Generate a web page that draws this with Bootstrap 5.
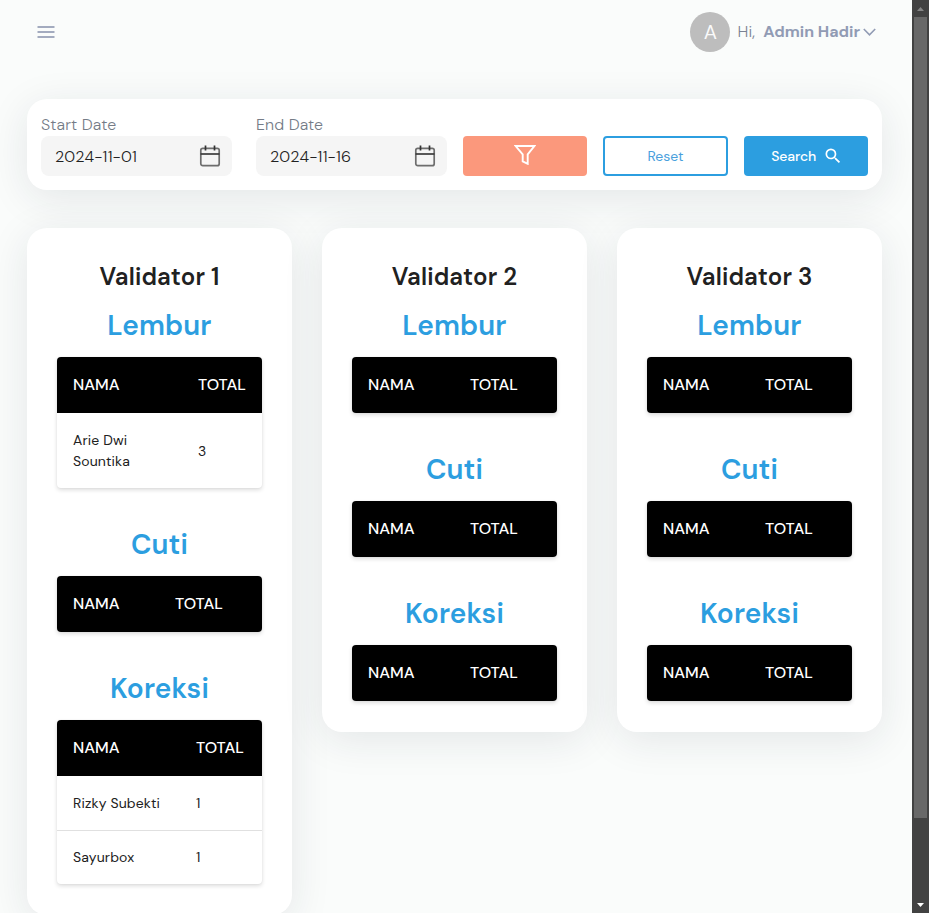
<!DOCTYPE html>
<html lang="id">
<head>
<meta charset="utf-8">
<meta name="viewport" content="width=device-width, initial-scale=1">
<title>Dashboard Validator</title>
<link href="https://cdn.jsdelivr.net/npm/bootstrap@5.3.0/dist/css/bootstrap.min.css" rel="stylesheet">
<style>
  body { font-family: "DM Sans", Inter, sans-serif; font-optical-sizing: none; background: #fafcfb; color: #212121; }
  .page-wrap { width: 912px; height: 913px; }
  .topbar { height: 64px; padding: 0 36px 0 37px; }
  .menu-toggle { color: #a3abbf; line-height: 0; }
  .user-avatar { width: 40px; height: 40px; background: #bdbdbd; color: #fafafa; font-size: 20px; margin-right: 7px; }
  .user-hi { color: #7a8294; font-size: 16px; font-weight: 300; letter-spacing: .2px; margin-right: 8px; }
  .user-name { color: #919bb4; font-size: 16px; font-weight: 700; margin-right: 3px; }
  .content-area { padding: 35px 30px 0 27px; }
  .panel { background: #fff; border-radius: 20px; box-shadow: 0 8px 40px rgba(30, 40, 60, .1); }
  .filter-panel { height: 91px; padding: 14px; gap: 16px; margin-bottom: 38px; }
  .date-group { width: 191px; }
  .date-group + .date-group { margin-left: 8px; margin-right: 0; }
  .date-label { color: #757c87; font-size: 16px; font-weight: 300; line-height: 23px; letter-spacing: .1px; }
  .date-box { height: 40px; background: #f5f5f5; border-radius: 8px; padding: 1px 10px 0 14px; font-size: 16px; font-weight: 300; letter-spacing: .3px; }
  .date-box svg { margin-bottom: 2px; }
  .action { height: 40px; flex: 1 1 0; border-radius: 4px; font-size: 14px; padding: 0; }
  .action-filter, .action-filter:hover { background: #fb987c; color: #fff; }
  .action-filter svg { margin-bottom: 2px; }
  .action-reset { border: 2px solid #2c9ee0; color: #4a9fdd; background: #fff; }
  .action-search { background: #2c9ee0; color: #fff; font-weight: 500; gap: 7px; letter-spacing: -.1px; }
  .action-search span { margin-left: 2px; }
  .validators { gap: 30px; }
  .validator { width: 265px; padding: 30px 30px 31px; }
  .validator-title { font-size: 24px; font-weight: 640; line-height: 36px; letter-spacing: .15px; padding-top: 1px; margin: 0 0 9px; }
  .section-title { font-size: 28px; font-weight: 650; line-height: 42px; letter-spacing: .15px; padding-top: 1px; margin: 0 0 10px; color: #2c9ee0; }
  .section-block + .section-block { margin-top: 35px; }
  .tally { border-radius: 4px; overflow: hidden; background: #fff; box-shadow: 0 2px 4px rgba(0, 0, 0, .14), 0 0 2px rgba(0, 0, 0, .06); }
  .tally-row { display: grid; grid-template-columns: 102px 1fr; padding-left: 16px; align-items: center; font-size: 14px; line-height: 21px; letter-spacing: .13px; min-height: 54px; }
  .tally-lembur .tally-row { grid-template-columns: 125px 1fr; }
  .tally-koreksi .tally-row { grid-template-columns: 123px 1fr; }
  .tally-head, .tally-lembur .tally-head { height: 56px; padding-bottom: 2px; background: #000; color: #fff; font-size: 16px; font-weight: 500; letter-spacing: 0; }
  .tally-line { border-top: 1px solid #e0e0e0; }
  .tally-tall { height: 75px; padding-top: 1px; }
  .tally-name { white-space: nowrap; }
  .scroll-rail { width: 17px; height: 913px; background: #424242; line-height: 0; }
  .scroll-grip { width: 13px; height: 801px; background: #686868; }
  .scroll-arrow { height: 17px; }
</style>
</head>
<body class="d-flex overflow-hidden">
<div class="page-wrap overflow-hidden">
  <header class="topbar d-flex align-items-center justify-content-between">
    <div class="menu-toggle"><svg width="18" height="14" viewBox="0 0 18 14"><path d="M.5 2h17M.5 7h17M.5 12h17" stroke="currentColor" stroke-width="2"/></svg></div>
    <div class="d-flex align-items-center">
      <div class="user-avatar rounded-circle d-flex align-items-center justify-content-center">A</div>
      <span class="user-hi">Hi,</span><span class="user-name">Admin Hadir</span>
      <svg width="13" height="8" viewBox="0 0 13 8" fill="none" stroke="#919bb4" stroke-width="1.600"><path d="M.8 1l5.7 5.8L12.200 1"/></svg>
    </div>
  </header>
  <main class="content-area">
    <section class="panel filter-panel d-flex align-items-end">
      <div class="date-group">
        <div class="date-label">Start Date</div>
        <div class="date-box d-flex align-items-center justify-content-between"><span>2024-11-01</span>
          <svg width="24" height="24" viewBox="0 0 24 24" fill="none" stroke="#6d6d6d" stroke-width="1.7"><rect x="2.800" y="4.300" width="18.400" height="17.400" rx="2"/><path d="M2.500 10h19" stroke="#3c3c3c"/><path d="M7.500 1.500v5M16.500 1.500v5" stroke="#333"/></svg></div>
      </div>
      <div class="date-group">
        <div class="date-label">End Date</div>
        <div class="date-box d-flex align-items-center justify-content-between"><span>2024-11-16</span>
          <svg width="24" height="24" viewBox="0 0 24 24" fill="none" stroke="#6d6d6d" stroke-width="1.7"><rect x="2.800" y="4.300" width="18.400" height="17.400" rx="2"/><path d="M2.500 10h19" stroke="#3c3c3c"/><path d="M7.500 1.500v5M16.500 1.500v5" stroke="#333"/></svg></div>
      </div>
      <button class="btn action action-filter" aria-label="Filter"><svg width="22" height="20" viewBox="0 0 22 20" fill="none" stroke="#fff" stroke-width="1.900"><path d="M1.600 1h18.800l-6.700 8.400v9.400l-5-2.500V9.400z"/></svg></button>
      <button class="btn action action-reset">Reset</button>
      <button class="btn action action-search d-flex align-items-center justify-content-center"><span>Search</span>
        <svg width="20" height="20" viewBox="0 0 24 24" fill="#fff"><path d="M15.500 14h-.79l-.28-.27A6.470 6.470 0 0 0 16 9.500 6.500 6.500 0 1 0 9.500 16c1.610 0 3.090-.59 4.230-1.570l.27.28v.79l5 4.990L20.490 19l-4.990-5zm-6 0C7.010 14 5 11.990 5 9.500S7.010 5 9.500 5 14 7.010 14 9.500 11.990 14 9.500 14z"/></svg></button>
    </section>
    <div class="validators d-flex align-items-start">
      <section class="panel validator">
        <h2 class="validator-title text-center">Validator 1</h2>
        <div class="section-block"><h3 class="section-title text-center">Lembur</h3>
          <div class="tally tally-lembur"><div class="tally-row tally-head"><span>NAMA</span><span>TOTAL</span></div>
            <div class="tally-row tally-tall"><span class="tally-name">Arie Dwi<br>Sountika</span><span>3</span></div></div></div>
        <div class="section-block"><h3 class="section-title text-center">Cuti</h3>
          <div class="tally"><div class="tally-row tally-head"><span>NAMA</span><span>TOTAL</span></div></div></div>
        <div class="section-block"><h3 class="section-title text-center">Koreksi</h3>
          <div class="tally tally-koreksi"><div class="tally-row tally-head"><span>NAMA</span><span>TOTAL</span></div>
            <div class="tally-row"><span class="tally-name">Rizky Subekti</span><span>1</span></div>
            <div class="tally-row tally-line"><span class="tally-name">Sayurbox</span><span>1</span></div></div></div>
      </section>
      <section class="panel validator">
        <h2 class="validator-title text-center">Validator 2</h2>
        <div class="section-block"><h3 class="section-title text-center">Lembur</h3>
          <div class="tally"><div class="tally-row tally-head"><span>NAMA</span><span>TOTAL</span></div></div></div>
        <div class="section-block"><h3 class="section-title text-center">Cuti</h3>
          <div class="tally"><div class="tally-row tally-head"><span>NAMA</span><span>TOTAL</span></div></div></div>
        <div class="section-block"><h3 class="section-title text-center">Koreksi</h3>
          <div class="tally"><div class="tally-row tally-head"><span>NAMA</span><span>TOTAL</span></div></div></div>
      </section>
      <section class="panel validator">
        <h2 class="validator-title text-center">Validator 3</h2>
        <div class="section-block"><h3 class="section-title text-center">Lembur</h3>
          <div class="tally"><div class="tally-row tally-head"><span>NAMA</span><span>TOTAL</span></div></div></div>
        <div class="section-block"><h3 class="section-title text-center">Cuti</h3>
          <div class="tally"><div class="tally-row tally-head"><span>NAMA</span><span>TOTAL</span></div></div></div>
        <div class="section-block"><h3 class="section-title text-center">Koreksi</h3>
          <div class="tally"><div class="tally-row tally-head"><span>NAMA</span><span>TOTAL</span></div></div></div>
      </section>
    </div>
  </main>
</div>
<div class="scroll-rail d-flex flex-column align-items-center">
  <div class="scroll-arrow d-flex align-items-center"><svg width="7" height="4" viewBox="0 0 7 4"><path d="M3.500 0L7 4H0z" fill="#868686"/></svg></div>
  <div class="scroll-grip"></div>
  <div class="scroll-arrow d-flex align-items-center mt-auto"><svg width="7" height="4" viewBox="0 0 7 4"><path d="M0 0h7L3.500 4z" fill="#fff"/></svg></div>
</div>
<script src="https://cdn.jsdelivr.net/npm/bootstrap@5.3.0/dist/js/bootstrap.bundle.min.js"></script>
</body>
</html>
